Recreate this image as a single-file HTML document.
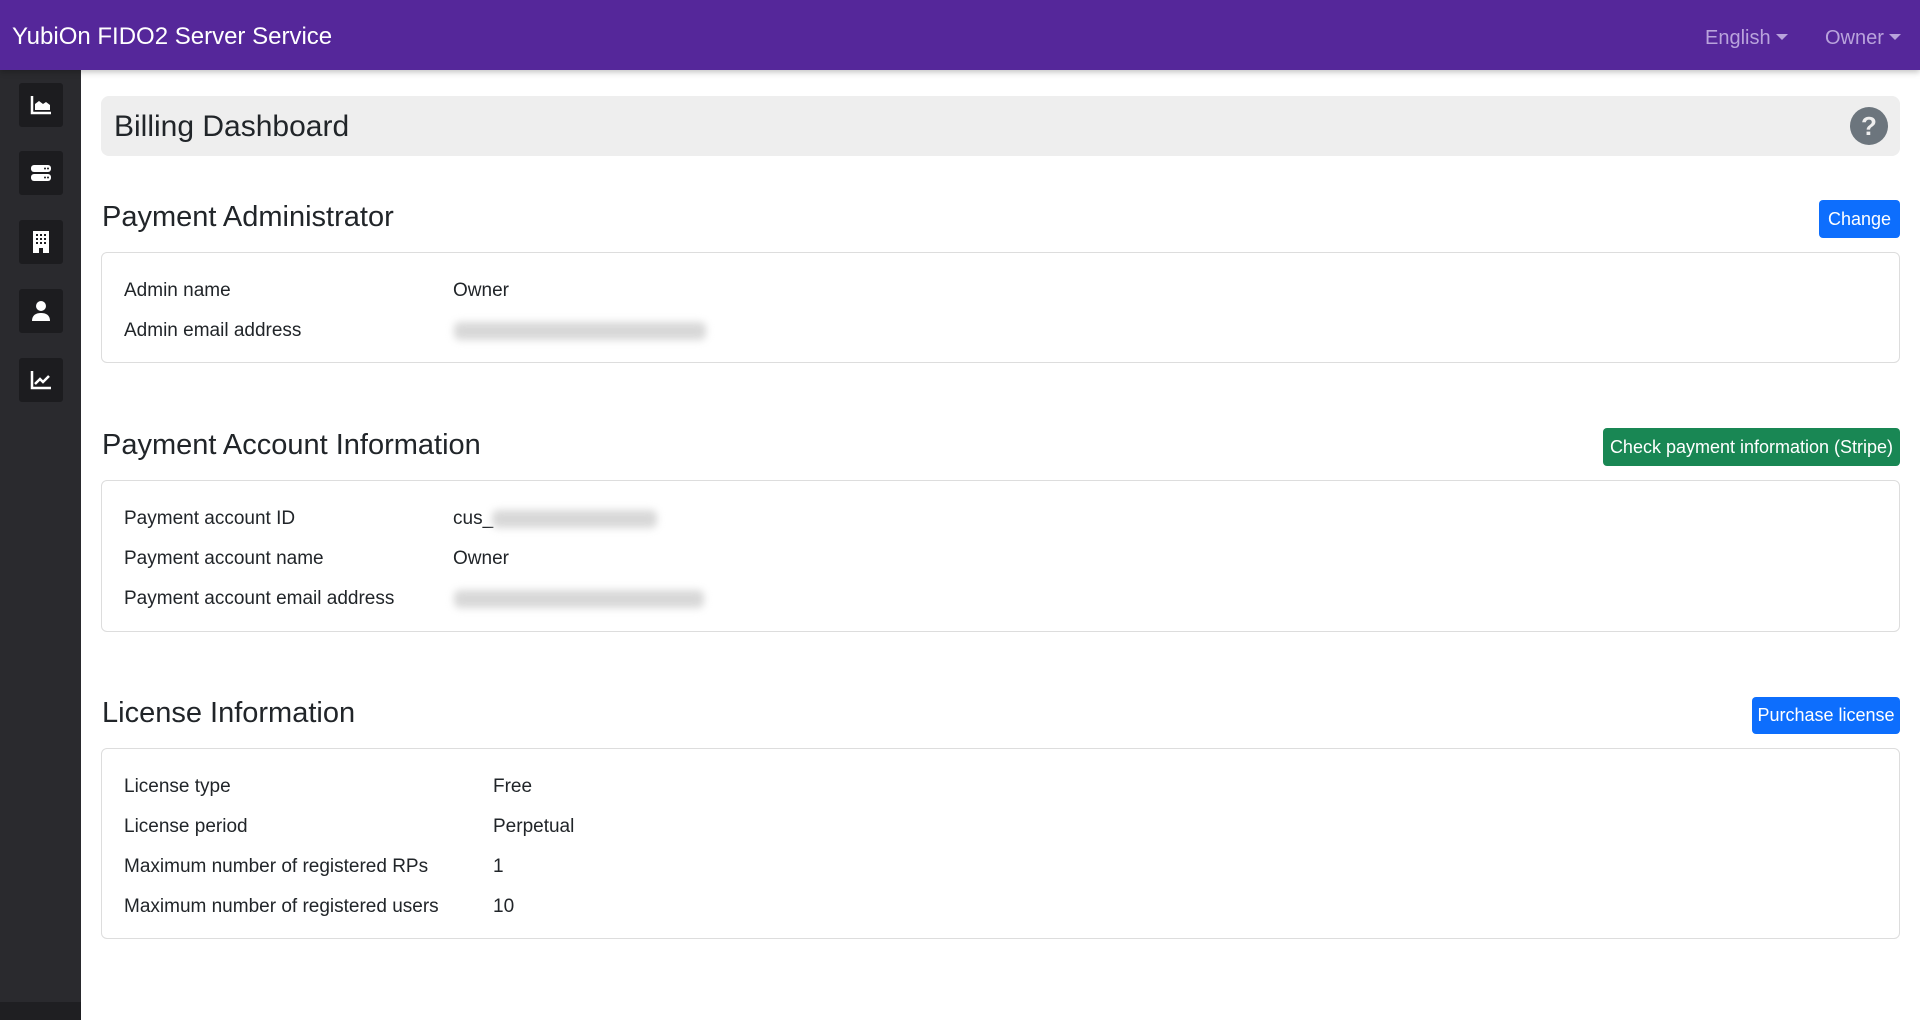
<!DOCTYPE html>
<html><head><meta charset="utf-8"><style>
*{box-sizing:border-box;margin:0;padding:0}
body{width:1920px;height:1020px;overflow:hidden;font-family:"Liberation Sans",sans-serif;background:#fff;color:#212529;position:relative}
.nav{position:absolute;left:0;top:0;width:1920px;height:70px;background:#55279a;box-shadow:0 2px 6px rgba(0,0,0,.25);z-index:2}
.brand{position:absolute;left:12px;top:23px;font-size:24px;color:#fff}
.nl{position:absolute;top:27px;font-size:20px;color:#b9a3dc}
.car{display:inline-block;border-left:6px solid transparent;border-right:6px solid transparent;border-top:6px solid #b9a3dc;vertical-align:4px;margin-left:5px}
.side{position:absolute;left:0;top:70px;width:81px;height:950px;background:#2a2a2e}
.side .bot{position:absolute;left:0;bottom:0;width:81px;height:18px;background:#1f1f22}
.ib{position:absolute;left:19px;width:44px;height:44px;background:#1c1c1f;border-radius:3px;display:flex;align-items:center;justify-content:center}
.hdr{position:absolute;left:101px;top:96px;width:1799px;height:60px;background:#eee;border-radius:8px}
.hdr h1{position:absolute;left:13px;top:14px;font-size:30px;font-weight:normal;color:#212529}
.help{position:absolute;left:1749px;top:11px;width:38px;height:38px;border-radius:50%;background:#6c757d;color:#eee;font-weight:bold;font-size:26px;text-align:center;line-height:38px}
h2{position:absolute;left:102px;font-size:29px;font-weight:normal;color:#212529}
.btn{position:absolute;color:#fff;font-size:18px;border-radius:4px;text-align:center}
.card{position:absolute;left:101px;width:1799px;border:1px solid #ddd;border-radius:6px}
.row{position:absolute;font-size:19px;color:#212529}
.lab{left:22px}
.blur{position:absolute;height:18px;background:#d8d8d8;filter:blur(4px);border-radius:6px}
</style></head><body>
<div class="nav">
<div class="brand">YubiOn FIDO2 Server Service</div>
<div class="nl" style="left:1705px">English<span class="car"></span></div>
<div class="nl" style="left:1825px">Owner<span class="car"></span></div>
</div>
<div class="side">
<div class="ib" style="top:13px"><svg width="22" height="20" viewBox="0 0 22 20"><path d="M2 1v17h19" stroke="#fff" stroke-width="2.5" fill="none"/><path d="M5 15V9l4-3 4 3 3-2 4 3v5z" fill="#fff"/></svg></div>
<div class="ib" style="top:81px"><svg width="22" height="20" viewBox="0 0 22 20"><rect x="1" y="2" width="20" height="7" rx="3" fill="#fff"/><rect x="1" y="11" width="20" height="7" rx="3" fill="#fff"/><circle cx="15" cy="5.5" r="1" fill="#1c1c1f"/><circle cx="18" cy="5.5" r="1" fill="#1c1c1f"/><circle cx="15" cy="14.5" r="1" fill="#1c1c1f"/><circle cx="18" cy="14.5" r="1" fill="#1c1c1f"/></svg></div>
<div class="ib" style="top:150px"><svg width="16" height="22" viewBox="0 0 16 22"><path d="M0 0h16v22H10v-5H6v5H0z" fill="#fff"/><g fill="#1c1c1f"><rect x="3" y="3" width="2" height="2"/><rect x="7" y="3" width="2" height="2"/><rect x="11" y="3" width="2" height="2"/><rect x="3" y="7" width="2" height="2"/><rect x="7" y="7" width="2" height="2"/><rect x="11" y="7" width="2" height="2"/><rect x="3" y="11" width="2" height="2"/><rect x="7" y="11" width="2" height="2"/><rect x="11" y="11" width="2" height="2"/></g></svg></div>
<div class="ib" style="top:219px"><svg width="20" height="22" viewBox="0 0 20 22"><circle cx="10" cy="6" r="5" fill="#fff"/><path d="M1 21c0-6 4-8 9-8s9 2 9 8z" fill="#fff"/></svg></div>
<div class="ib" style="top:288px"><svg width="22" height="20" viewBox="0 0 22 20"><path d="M2 1v17h19" stroke="#fff" stroke-width="2.5" fill="none"/><path d="M5 14l5-5 3 3 6-6" stroke="#fff" stroke-width="2.5" fill="none"/></svg></div>
<div class="bot"></div>
</div>
<div class="hdr"><h1>Billing Dashboard</h1><div class="help">?</div></div>

<h2 style="top:201px">Payment Administrator</h2>
<div class="btn" style="left:1819px;top:200px;width:81px;height:38px;line-height:38px;background:#0d6efd">Change</div>
<div class="card" style="top:252px;height:111px">
<div class="row lab" style="top:27px">Admin name</div><div class="row" style="left:351px;top:27px">Owner</div>
<div class="row lab" style="top:67px">Admin email address</div><div class="blur" style="left:352px;top:69px;width:252px"></div>
</div>

<h2 style="top:429px">Payment Account Information</h2>
<div class="btn" style="left:1603px;top:428px;width:297px;height:38px;line-height:38px;background:#198754">Check payment information (Stripe)</div>
<div class="card" style="top:480px;height:152px">
<div class="row lab" style="top:27px">Payment account ID</div><div class="row" style="left:351px;top:27px">cus_</div><div class="blur" style="left:390px;top:29px;width:165px"></div>
<div class="row lab" style="top:67px">Payment account name</div><div class="row" style="left:351px;top:67px">Owner</div>
<div class="row lab" style="top:107px">Payment account email address</div><div class="blur" style="left:352px;top:109px;width:250px"></div>
</div>

<h2 style="top:697px">License Information</h2>
<div class="btn" style="left:1752px;top:697px;width:148px;height:37px;line-height:37px;background:#0d6efd">Purchase license</div>
<div class="card" style="top:748px;height:191px">
<div class="row lab" style="top:27px">License type</div><div class="row" style="left:391px;top:27px">Free</div>
<div class="row lab" style="top:67px">License period</div><div class="row" style="left:391px;top:67px">Perpetual</div>
<div class="row lab" style="top:107px">Maximum number of registered RPs</div><div class="row" style="left:391px;top:107px">1</div>
<div class="row lab" style="top:147px">Maximum number of registered users</div><div class="row" style="left:391px;top:147px">10</div>
</div>
</body></html>
